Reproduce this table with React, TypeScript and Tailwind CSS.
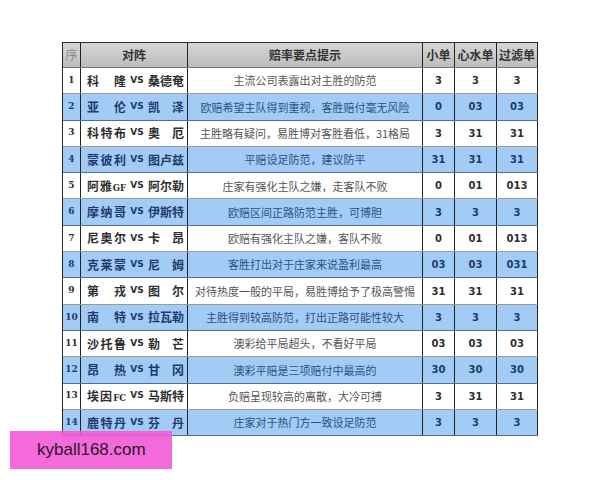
import React from 'react';

type Row = {
  no: number;
  home: string;
  away: string;
  tip: string;
  a: string;
  b: string;
  c: string;
};

const rows: Row[] = [
  { no: 1, home: '科隆', away: '桑德奄', tip: '主流公司表露出对主胜的防范', a: '3', b: '3', c: '3' },
  { no: 2, home: '亚伦', away: '凯泽', tip: '欧赔希望主队得到重视，客胜赔付毫无风险', a: '0', b: '03', c: '03' },
  { no: 3, home: '科特布', away: '奥厄', tip: '主胜略有疑问，易胜博对客胜看低，31格局', a: '3', b: '31', c: '31' },
  { no: 4, home: '蒙彼利', away: '图卢兹', tip: '平赔设足防范，建议防平', a: '31', b: '31', c: '31' },
  { no: 5, home: '阿雅GF', away: '阿尔勒', tip: '庄家有强化主队之嫌，走客队不败', a: '0', b: '01', c: '013' },
  { no: 6, home: '摩纳哥', away: '伊斯特', tip: '欧赔区间正路防范主胜，可博胆', a: '3', b: '3', c: '3' },
  { no: 7, home: '尼奥尔', away: '卡昂', tip: '欧赔有强化主队之嫌，客队不败', a: '0', b: '01', c: '013' },
  { no: 8, home: '克莱蒙', away: '尼姆', tip: '客胜打出对于庄家来说盈利最高', a: '03', b: '03', c: '031' },
  { no: 9, home: '第戎', away: '图尔', tip: '对待热度一般的平局，易胜博给予了极高警惕', a: '31', b: '31', c: '31' },
  { no: 10, home: '南特', away: '拉瓦勒', tip: '主胜得到较高防范，打出正路可能性较大', a: '3', b: '3', c: '3' },
  { no: 11, home: '沙托鲁', away: '勒芒', tip: '澳彩给平局超头，不看好平局', a: '03', b: '03', c: '03' },
  { no: 12, home: '昂热', away: '甘冈', tip: '澳彩平赔是三项赔付中最高的', a: '30', b: '30', c: '30' },
  { no: 13, home: '埃因FC', away: '马斯特', tip: '负赔呈现较高的离散，大冷可搏', a: '3', b: '31', c: '31' },
  { no: 14, home: '鹿特丹', away: '芬丹', tip: '庄家对于热门方一致设足防范', a: '3', b: '3', c: '3' },
];

// split a team name into pieces: latin runs stay together
function pieces(name: string) {
  return name.match(/[A-Za-z]+|./g) ?? [];
}

function Team({ name, w }: { name: string; w: string }) {
  return (
    <span className={`flex items-baseline justify-between ${w}`}>
      {pieces(name).map((p, i) => (
        <span key={i} className={/[A-Za-z]/.test(p) ? "font-['DejaVu_Serif',serif] text-[8.5px]" : ''}>
          {p}
        </span>
      ))}
    </span>
  );
}

const cols = 'grid grid-cols-[18px_107px_235px_32px_42px_41px]';
const cell = 'flex items-center justify-center border-r border-[#222]';

export default function App() {
  return (
    <div className="relative h-[480px] w-[600px] bg-white">
      <div className="pt-[42px] pl-[62px]">
        <div className="w-[476px] border-t border-l border-[#2a2a2a] font-['Noto_Sans_CJK_SC',sans-serif]">
          {/* header */}
          <div className={`${cols} h-[25px] bg-gradient-to-b from-[#d6d6d6] to-[#bdbdbd] border-b border-[#777] text-[12px] text-[#333]`}>
            <div className={`${cell} font-normal text-[#8a8a8a]`}>序</div>
            <div className={`${cell} font-bold`}>对阵</div>
            <div className={`${cell} font-bold`}>赔率要点提示</div>
            <div className={`${cell} font-bold`}>小单</div>
            <div className={`${cell} font-bold`}>心水单</div>
            <div className={`${cell} font-bold`}>过滤单</div>
          </div>

          {rows.map((r) => {
            const hl = r.no % 2 === 0;
            const txt = hl ? 'text-[#1e3a6c]' : 'text-[#2e2e2e]';
            return (
              <div
                key={r.no}
                className={`${cols} h-[26.3px] border-b ${hl ? 'bg-[#a2cbf5] border-[#4f6f99]' : 'bg-white border-[#9a9a9a]'}`}
              >
                <div className={`${cell} font-['DejaVu_Serif',serif] text-[9px] font-bold ${txt}`}>{r.no}</div>
                <div className={`${cell} justify-start pl-[6px] pr-[3px] text-[12px] font-bold ${txt}`}>
                  <Team name={r.home} w="w-[39px]" />
                  <span className="flex flex-1 justify-center font-['DejaVu_Sans',sans-serif] text-[9px]">VS</span>
                  <Team name={r.away} w="w-[36px]" />
                </div>
                <div className={`${cell} text-[11px] ${hl ? 'text-[#2f4f82]' : 'text-[#555]'}`}>{r.tip}</div>
                <div className={`${cell} font-['DejaVu_Sans',sans-serif] text-[10px] font-bold ${txt}`}>{r.a}</div>
                <div className={`${cell} font-['DejaVu_Sans',sans-serif] text-[10px] font-bold ${txt}`}>{r.b}</div>
                <div className={`${cell} font-['DejaVu_Sans',sans-serif] text-[10px] font-bold ${txt}`}>{r.c}</div>
              </div>
            );
          })}
        </div>
      </div>

      {/* watermark */}
      <div className="absolute left-[10px] top-[431px] flex h-[38px] w-[162px] items-center bg-[#f45ad6]/90 pl-[27px] font-['Liberation_Sans',sans-serif] text-[17px] text-[#2a1628]">
        kyball168.com
      </div>
    </div>
  );
}
